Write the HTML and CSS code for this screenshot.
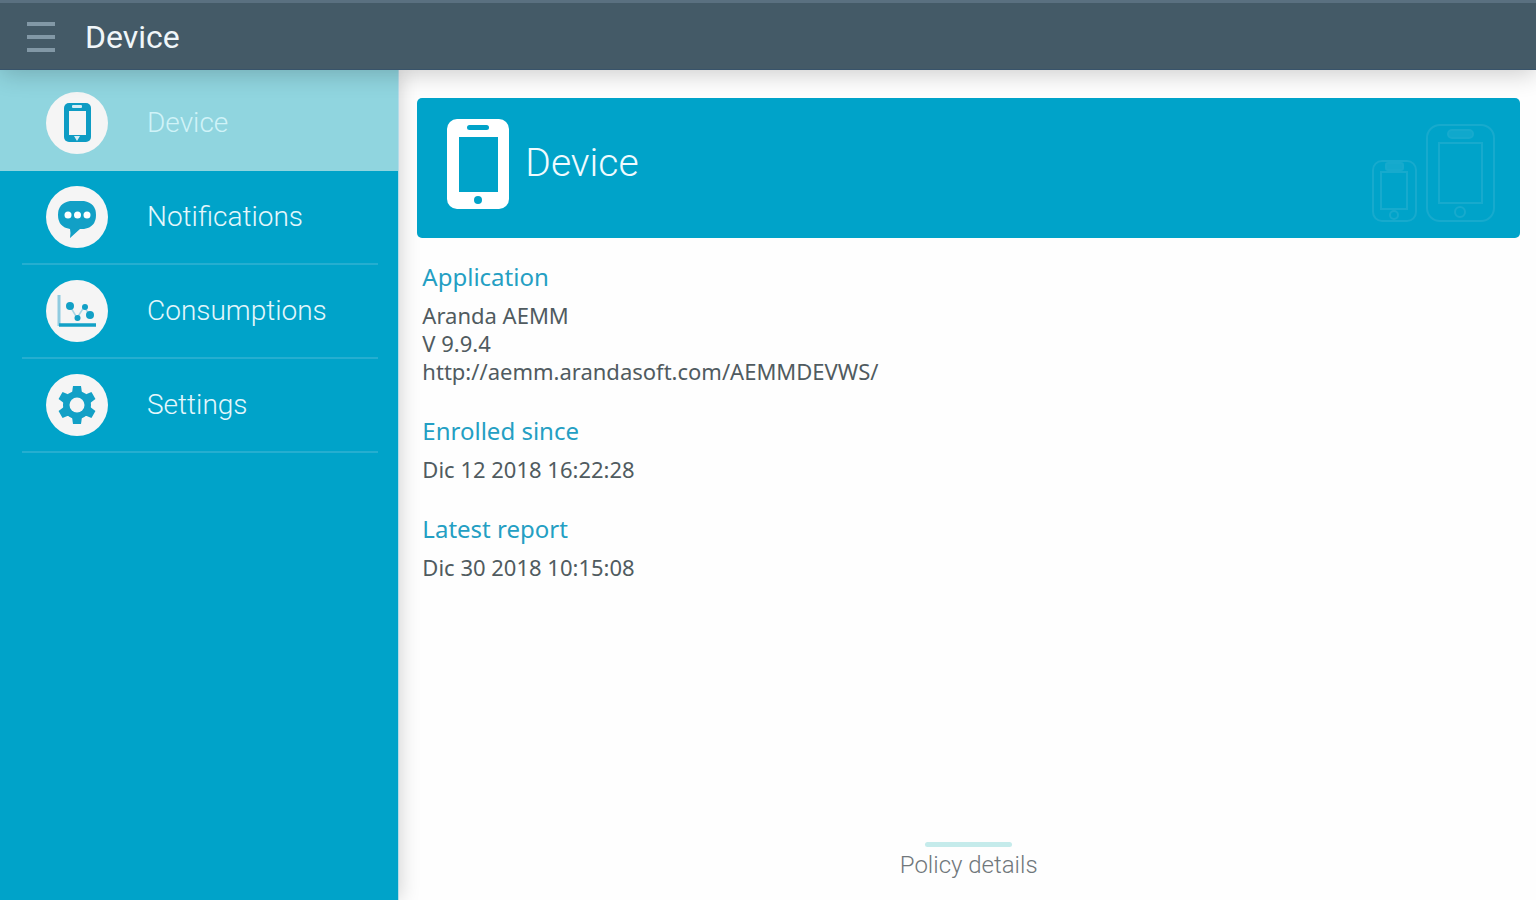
FILE: index.html
```html
<!DOCTYPE html>
<html lang="en">
<head>
<meta charset="utf-8">
<meta name="viewport" content="width=device-width, initial-scale=1">
<title>Device</title>
<link rel="stylesheet" href="styles.css">
</head>
<body>
<header class="topbar">
  <button class="menu-button" type="button" aria-label="Menu">
    <span class="menu-line"></span><span class="menu-line"></span><span class="menu-line"></span>
  </button>
  <h1 class="topbar-title">Device</h1>
</header>
<div class="layout">
  <nav class="sidebar">
    <a class="nav-item nav-item-active" href="#device" aria-current="page">
      <span class="nav-icon">
        <svg viewBox="0 0 62 62" aria-hidden="true">
          <rect x="18" y="11" width="27" height="39" rx="5" fill="#0e9cc4"/>
          <rect x="23" y="19" width="17" height="24" fill="#f5f5f5"/>
          <rect x="26" y="13" width="10" height="3" rx="1" fill="#d5edf5"/>
          <path d="M28 44h6l-3 5z" fill="#d5edf5"/>
        </svg>
      </span>
      <span class="nav-label">Device</span>
    </a>
    <a class="nav-item" href="#notifications">
      <span class="nav-icon">
        <svg viewBox="0 0 62 62" aria-hidden="true">
          <path d="M24 15h14q12 2 12 14q0 12-12 14h-4L24 52q1-5 0-9q-12-2-12-14q0-12 12-14z" fill="#12a0c6"/>
          <circle cx="22" cy="29" r="3.500" fill="#fff"/><circle cx="31.500" cy="29" r="3.500" fill="#fff"/><circle cx="41" cy="29" r="3.500" fill="#fff"/>
        </svg>
      </span>
      <span class="nav-label">Notifications</span>
    </a>
    <a class="nav-item" href="#consumptions">
      <span class="nav-icon">
        <svg viewBox="0 0 62 62" aria-hidden="true">
          <path d="M13 15v31" stroke="#8fcbe0" stroke-width="3"/>
          <path d="M13 45h37" stroke="#12a0c6" stroke-width="3.500"/>
          <path d="M24 26l7 12l7-11l6 8" fill="none" stroke="#a8d4e3" stroke-width="1.500"/>
          <circle cx="24" cy="26" r="4" fill="#12a0c6"/><circle cx="31.500" cy="38" r="3" fill="#12a0c6"/>
          <circle cx="39" cy="27" r="3" fill="#12a0c6"/><circle cx="44" cy="35" r="4" fill="#12a0c6"/>
        </svg>
      </span>
      <span class="nav-label">Consumptions</span>
    </a>
    <a class="nav-item" href="#settings">
      <span class="nav-icon">
        <svg viewBox="0 0 62 62" aria-hidden="true">
          <g fill="#12a0c6">
            <circle cx="31" cy="31" r="14"/>
            <g id="teeth"><path d="M26 19l1-7h8l1 7v24l-1 7h-8l-1-7z"/></g>
            <use href="#teeth" transform="rotate(60 31 31)"/>
            <use href="#teeth" transform="rotate(120 31 31)"/>
          </g>
          <circle cx="31" cy="31" r="7.500" fill="#f5f5f5"/>
        </svg>
      </span>
      <span class="nav-label">Settings</span>
    </a>
  </nav>
  <main class="content">
    <section class="banner">
      <svg class="banner-icon" viewBox="0 0 62 90" aria-hidden="true">
        <rect width="62" height="90" rx="10" fill="#fff"/>
        <rect x="12" y="18" width="39" height="55" fill="#00a3c9"/>
        <rect x="20" y="6" width="22" height="5" rx="2.500" fill="#00a3c9"/>
        <circle cx="31" cy="81" r="4" fill="#00a3c9"/>
      </svg>
      <h2 class="banner-title">Device</h2>
      <svg class="banner-art" viewBox="0 0 124 98" fill="none" stroke="#17aacd" stroke-width="2" aria-hidden="true">
        <rect x="1" y="37" width="43" height="60" rx="9"/>
        <rect x="9" y="48" width="26" height="37"/>
        <rect x="14" y="39" width="17" height="7" rx="2" fill="#14a9cc"/>
        <circle cx="22" cy="91" r="4"/>
        <rect x="55" y="1" width="67" height="96" rx="13"/>
        <rect x="67" y="19" width="43" height="60"/>
        <rect x="76" y="6" width="25" height="8" rx="4" fill="#10a8cc"/>
        <circle cx="88" cy="88" r="5"/>
      </svg>
    </section>
    <dl class="details">
      <div class="detail">
        <dt class="detail-name">Application</dt>
        <dd class="detail-value">Aranda AEMM</dd>
        <dd class="detail-value">V 9.9.4</dd>
        <dd class="detail-value">http://aemm.arandasoft.com/AEMMDEVWS/</dd>
      </div>
      <div class="detail">
        <dt class="detail-name">Enrolled since</dt>
        <dd class="detail-value">Dic 12 2018 16:22:28</dd>
      </div>
      <div class="detail">
        <dt class="detail-name">Latest report</dt>
        <dd class="detail-value">Dic 30 2018 10:15:08</dd>
      </div>
    </dl>
    <button class="policy" type="button"><span class="policy-handle"></span>Policy details</button>
  </main>
</div>
</body>
</html>
```
FILE: styles.css
```css
* { box-sizing: border-box; }
body {
  margin: 0;
  min-height: 100vh;
  display: flex;
  flex-direction: column;
  background: #fefefe;
  font-family: Roboto, sans-serif;
}
h1, h2, dl, dd { margin: 0; font-weight: 400; }
button { border: 0; background: none; font: inherit; cursor: pointer; }
.topbar {
  display: flex;
  align-items: center;
  gap: 30px;
  height: 70px;
  padding: 1px 27px 0;
  border-top: 3px solid #5a7080;
  border-bottom: 1px solid #38536a;
  background: #445a67;
  box-shadow: 0 4px 24px rgba(0, 0, 0, 0.2);
  z-index: 1;
}
.menu-button {
  display: flex;
  flex-direction: column;
  gap: 9px;
  width: 28px;
  padding: 0;
}
.menu-line { height: 4px; background: #8298a6; }
.topbar-title { font-size: 32px; line-height: 40px; color: #f0f6f9; }
.layout { flex: 1; display: flex; }
.sidebar {
  width: 26%;
  background: #00a3c9;
  border-right: 1px solid #b5dbe8;
  box-shadow: 0 0 20px rgba(0, 0, 0, 0.2);
}
.nav-item {
  display: flex;
  align-items: center;
  gap: 39px;
  height: 94px;
  margin: 0 20px 0 22px;
  padding-left: 24px;
  border-bottom: 2px solid #25aed0;
  color: #e4f7fc;
  font-size: 28px;
  font-weight: 300;
  line-height: 36px;
  text-decoration: none;
}
.nav-item-active {
  height: 101px;
  margin: 0;
  padding: 4px 0 0 46px;
  border: 0;
  background: #90d5df;
  color: #d0f3f8;
}
.nav-icon {
  width: 62px;
  height: 62px;
  border-radius: 50%;
  background: #f5f5f5;
}
.nav-icon svg { display: block; }
.content {
  flex: 1;
  display: flex;
  flex-direction: column;
  padding: 28px 16px 19px 18px;
}
.banner {
  display: flex;
  align-items: center;
  height: 140px;
  padding: 0 24px 0 30px;
  border-radius: 5px;
  background: #00a3c9;
}
.banner-icon { width: 62px; height: 90px; margin-bottom: 8px; }
.banner-title {
  margin: 0 0 10px 16px;
  color: #f0fbff;
  font-size: 39px;
  font-weight: 300;
  line-height: 48px;
}
.banner-art { width: 124px; height: 98px; margin: 10px 0 0 auto; }
.details {
  display: flex;
  flex-direction: column;
  gap: 28px;
  padding: 21px 5px;
  font-family: "Noto Sans", sans-serif;
}
.detail-name {
  margin-bottom: 6px;
  color: #249fc3;
  font-size: 24px;
  line-height: 36px;
}
.detail-value { color: #505b60; font-size: 22px; line-height: 28px; }
.policy {
  display: flex;
  flex-direction: column;
  align-items: center;
  gap: 2px;
  align-self: center;
  margin-top: auto;
  padding: 0;
  color: #70777b;
  font-size: 24px;
  font-weight: 300;
  line-height: 32px;
}
.policy-handle {
  width: 87px;
  height: 5px;
  border-radius: 3px;
  background: #c5ebeb;
}
```
